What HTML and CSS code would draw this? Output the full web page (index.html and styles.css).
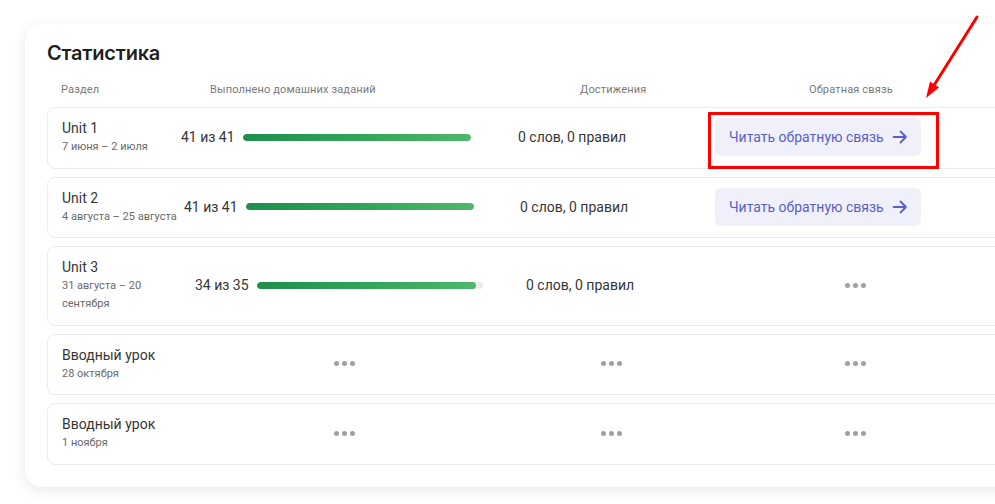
FILE: index.html
```html
<!DOCTYPE html>
<html lang="ru">
<head>
<meta charset="utf-8">
<title>Статистика</title>
<link rel="stylesheet" href="styles.css">
</head>
<body>
<section class="card">
  <h1 class="card__title">Статистика</h1>
  <div class="thead">
    <span class="thead__cell thead__cell--name">Раздел</span>
    <span class="thead__cell thead__cell--progress">Выполнено домашних заданий</span>
    <span class="thead__cell thead__cell--ach">Достижения</span>
    <span class="thead__cell thead__cell--fb">Обратная связь</span>
  </div>
  <div class="rows">
    <div class="row row--u1">
      <div class="unit"><div class="unit__name">Unit 1</div><div class="unit__date">7 июня – 2 июля</div></div>
      <div class="progress"><span class="progress__label">41 из 41</span><div class="progress__track"><div class="progress__fill" style="width:100%"></div></div></div>
      <div class="ach">0 слов, 0 правил</div>
      <button class="fb-btn">Читать обратную связь
        <svg class="fb-btn__icon" viewBox="0 0 16 16" width="16" height="16"><path d="M1.5 8h12.5M8.5 2.5L14 8l-5.5 5.5" fill="none" stroke="currentColor" stroke-width="1.8" stroke-linecap="round" stroke-linejoin="round"/></svg>
      </button>
    </div>
    <div class="row row--u2">
      <div class="unit"><div class="unit__name">Unit 2</div><div class="unit__date unit__date--nowrap">4 августа – 25 августа</div></div>
      <div class="progress"><span class="progress__label">41 из 41</span><div class="progress__track"><div class="progress__fill" style="width:100%"></div></div></div>
      <div class="ach">0 слов, 0 правил</div>
      <button class="fb-btn">Читать обратную связь
        <svg class="fb-btn__icon" viewBox="0 0 16 16" width="16" height="16"><path d="M1.5 8h12.5M8.5 2.5L14 8l-5.5 5.5" fill="none" stroke="currentColor" stroke-width="1.8" stroke-linecap="round" stroke-linejoin="round"/></svg>
      </button>
    </div>
    <div class="row row--u3">
      <div class="unit"><div class="unit__name">Unit 3</div><div class="unit__date">31 августа – 20 сентября</div></div>
      <div class="progress"><span class="progress__label">34 из 35</span><div class="progress__track progress__track--short"><div class="progress__fill" style="width:97.1%"></div></div></div>
      <div class="ach">0 слов, 0 правил</div>
      <div class="dots dots--fb"><i></i><i></i><i></i></div>
    </div>
    <div class="row row--empty">
      <div class="unit"><div class="unit__name">Вводный урок</div><div class="unit__date">28 октября</div></div>
      <div class="dots"><i></i><i></i><i></i></div>
      <div class="dots"><i></i><i></i><i></i></div>
      <div class="dots dots--fb"><i></i><i></i><i></i></div>
    </div>
    <div class="row row--empty">
      <div class="unit"><div class="unit__name">Вводный урок</div><div class="unit__date">1 ноября</div></div>
      <div class="dots"><i></i><i></i><i></i></div>
      <div class="dots"><i></i><i></i><i></i></div>
      <div class="dots dots--fb"><i></i><i></i><i></i></div>
    </div>
  </div>
</section>

<div class="mark-box"></div>
<svg class="mark-arrow" width="70" height="100" viewBox="910 10 70 100">
  <line x1="977" y1="17" x2="934.5" y2="84.5" stroke="#ff0000" stroke-width="3" stroke-linecap="round"/>
  <polygon points="926,98 939,87.5 930,81.5" fill="#ff0000"/>
</svg>
</body>
</html>
```
FILE: styles.css
```css
* { box-sizing: border-box; }

html, body {
  margin: 0;
  padding: 0;
  background: #ffffff;
  overflow: hidden;
}

body {
  width: 995px;
  height: 504px;
  position: relative;
  font-family: Roboto, "Noto Sans", sans-serif;
  color: #333333;
}

.card {
  margin: 24px 0 0 25px;
  width: 1000px;
  padding: 17px 22px 22px 22px;
  background: #ffffff;
  border-radius: 16px;
  box-shadow: 0 3px 14px rgba(0, 0, 0, 0.09), 0 0 2px rgba(0, 0, 0, 0.04);
}

.card__title {
  margin: 0;
  font-family: Inter, Roboto, sans-serif;
  font-size: 20px;
  line-height: 24px;
  font-weight: 600;
  color: #1f1f1f;
  letter-spacing: -0.2px;
}

.thead {
  display: grid;
  grid-template-columns: 115px 334px 200px 288px;
  padding-left: 14px;
  margin-top: 17px;
  margin-bottom: 9px;
  font-size: 11px;
  line-height: 16px;
  color: #7a7a7a;
  letter-spacing: 0.15px;
}

.thead__cell--progress { margin-left: 34px; }
.thead__cell--ach { margin-left: 70px; }
.thead__cell--fb { margin-left: 99px; }

.rows {
  display: flex;
  flex-direction: column;
  gap: 8px;
}

.row {
  display: grid;
  grid-template-columns: 115px 334px 200px 288px;
  align-items: center;
  padding: 10px 14px 11.5px;
  border: 1px solid #ececec;
  border-radius: 8px;
  --p-shift: 4px;
  --a-shift: 7px;
}

.row--u2 { --p-shift: 7px; --a-shift: 9px; }
.row--u3 { --p-shift: 18px; --a-shift: 15px; }

.unit__name {
  font-size: 14px;
  line-height: 20px;
  color: #363636;
}

.unit__date {
  font-size: 11px;
  line-height: 18px;
  color: #6a6a6a;
}

.unit__date--nowrap { white-space: nowrap; }

.progress {
  display: flex;
  align-items: center;
  gap: 8px;
  margin-left: var(--p-shift);
}

.progress__label {
  font-size: 14px;
  color: #363636;
  white-space: nowrap;
}

.progress__track {
  width: 228px;
  height: 7px;
  border-radius: 4px;
  background: #ececec;
  overflow: hidden;
}

.progress__track--short { width: 226px; }

.progress__fill {
  height: 100%;
  border-radius: 4px;
  background: linear-gradient(90deg, #1e8f4d 0%, #34a65a 55%, #4db86b 100%);
}

.ach {
  font-size: 14px;
  color: #363636;
  margin-left: var(--a-shift);
  white-space: nowrap;
}

.fb-btn {
  justify-self: start;
  margin-left: 4px;
  display: flex;
  align-items: center;
  gap: 8px;
  height: 38px;
  width: 206px;
  padding: 0 14px;
  border: none;
  border-radius: 6px;
  background: #f0f0fb;
  color: #5a5fc6;
  font-family: inherit;
  font-size: 14px;
  white-space: nowrap;
  cursor: pointer;
}

.fb-btn__icon { flex: none; }

.dots {
  justify-self: center;
  display: flex;
  gap: 3px;
}

.dots i {
  width: 5px;
  height: 5px;
  border-radius: 50%;
  background: #a0a0a0;
}

.mark-box {
  position: absolute;
  left: 708px;
  top: 112px;
  width: 231px;
  height: 57px;
  border: 3px solid #ff0000;
}

.mark-arrow {
  position: absolute;
  left: 910px;
  top: 10px;
}
```
